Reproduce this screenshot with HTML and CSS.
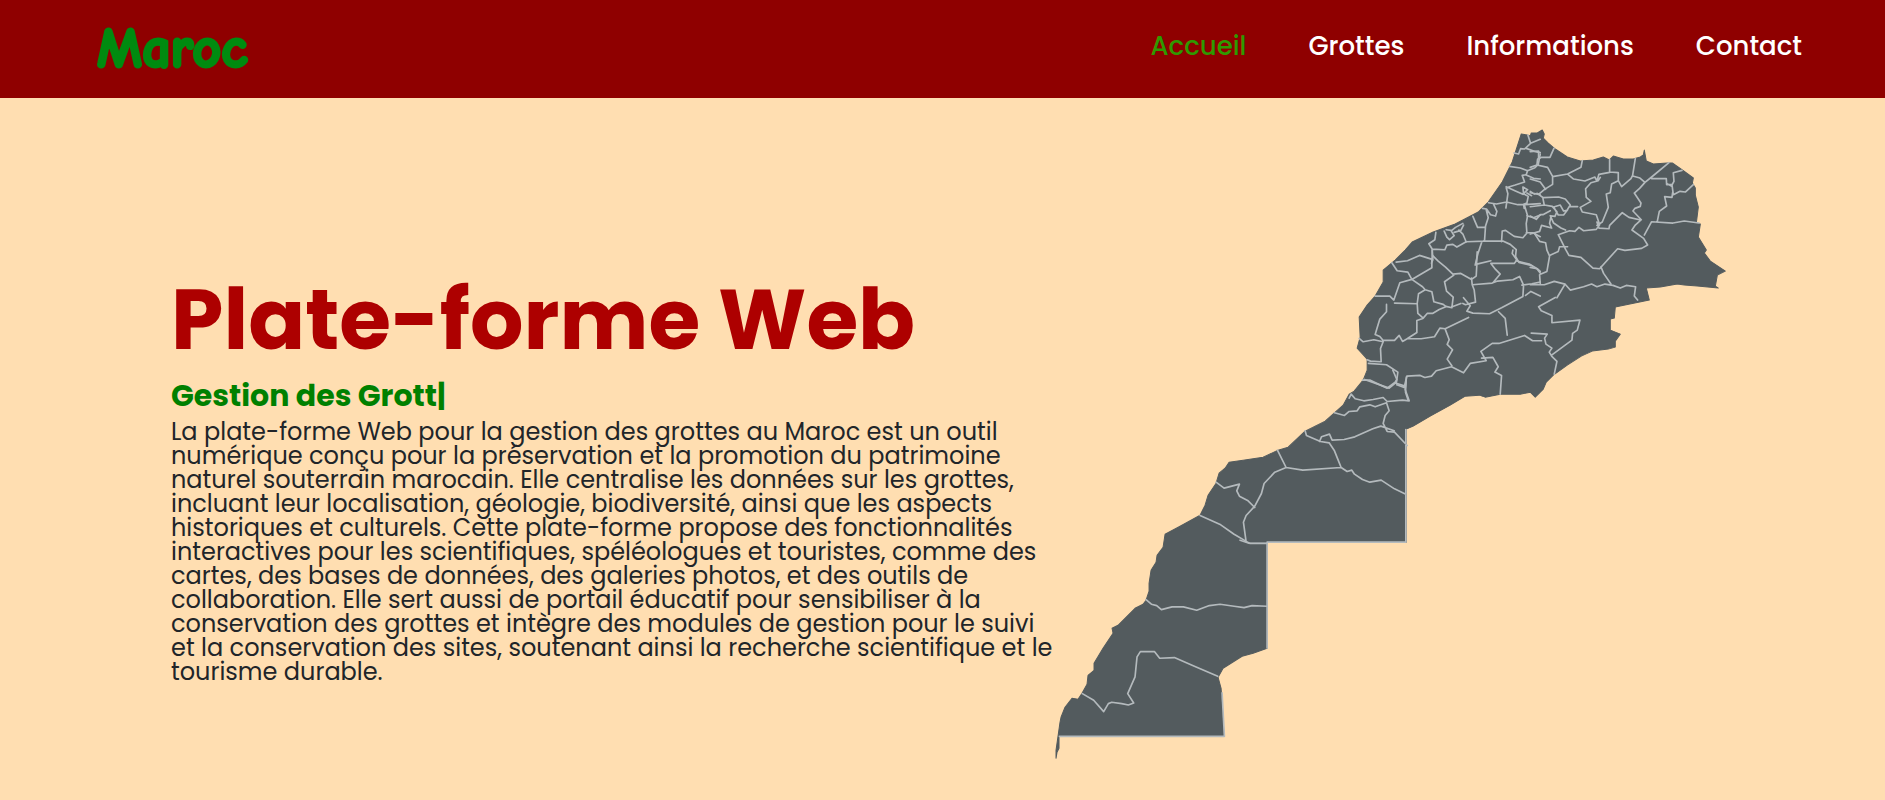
FILE: index.html
```
<!DOCTYPE html>
<html lang="fr">
<head>
<meta charset="utf-8">
<meta name="viewport" content="width=device-width, initial-scale=1">
<title>Maroc</title>
<link rel="stylesheet" href="styles.css">
</head>
<body>
<header class="header">
  <a class="logo" href="#">Maroc</a>
  <nav class="nav">
    <a class="nav-link active" href="#">Accueil</a>
    <a class="nav-link" href="#">Grottes</a>
    <a class="nav-link" href="#">Informations</a>
    <a class="nav-link" href="#">Contact</a>
  </nav>
</header>
<main class="hero">
  <section class="intro">
    <h1 class="title">Plate-forme Web</h1>
    <h2 class="subtitle">Gestion des Grott<span class="cursor">|</span></h2>
    <p class="text">La plate-forme Web pour la gestion des grottes au Maroc est un outil<br>
      numérique conçu pour la préservation et la promotion du patrimoine<br>
      naturel souterrain marocain. Elle centralise les données sur les grottes,<br>
      incluant leur localisation, géologie, biodiversité, ainsi que les aspects<br>
      historiques et culturels. Cette plate-forme propose des fonctionnalités<br>
      interactives pour les scientifiques, spéléologues et touristes, comme des<br>
      cartes, des bases de données, des galeries photos, et des outils de<br>
      collaboration. Elle sert aussi de portail éducatif pour sensibiliser à la<br>
      conservation des grottes et intègre des modules de gestion pour le suivi<br>
      et la conservation des sites, soutenant ainsi la recherche scientifique et le<br>
      tourisme durable.</p>
  </section>
  <svg class="map" viewBox="1050 122 690 642" role="img" aria-label="Carte du Maroc">
    <path class="land" d="M1521 134L1527 135 1530 136 1531 133 1537 133 1542 130 1544 134 1543 138 1548 143 1555 149 1567 157 1580 161 1593 160 1603 157 1609 160 1613 156 1623 159 1633 159 1640 157 1643 155 1644 150 1646 161 1653 164 1667 163 1672 163 1682 170 1693 178 1692 183 1695 188 1695 195 1698 207 1696 223 1700 224 1698 237 1706 250 1704 253 1710 261 1725 271 1717 275 1715 286 1718 288 1697 286 1684 285 1677 284 1660 287 1646 288 1649 300 1615 307 1614 318 1610 319 1610 330 1620 334 1615 341 1615 347 1608 349 1592 351 1581 356 1567 365 1553 375 1546 382 1543 389 1535 397 1530 392 1520 394 1500 394 1485 397 1479 395 1465 396 1450 405 1430 416 1413 426 1406 429 1406 542 1267 542 1267 648 1253 653 1242 656 1223 668 1218 677 1221 688 1224 736 1059 736 1059 748 1057 752 1056 758 1056 750 1060 722 1061 717 1065 707 1072 698 1078 699 1082 693 1087 684 1088 675 1094 670 1094 663 1103 648 1113 633 1112 628 1118 625 1135 608 1143 604 1146 600 1149 591 1149 583 1151 570 1156 562 1157 555 1163 547 1165 534 1180 526 1200 515 1205 505 1208 495 1216 483 1219 473 1225 468 1229 462 1243 460 1263 457 1278 450 1288 447 1305 431 1325 421 1334 413 1343 405 1349 394 1354 391 1363 380 1367 370 1367 359 1357 348 1360 337 1359 317 1367 305 1375 296 1383 282 1383 270 1395 260 1405 250 1412 242 1433 232 1455 224 1478 212 1488 202 1502 182 1512 162Z"/>
    <g class="borders" transform="translate(1340 115) scale(.3333)">
      <path d="M563 60l8 25-18 17-12-1-6 16-14-3M571 85l29-12M558 100l28 10 14 3M508 154l32 5 22 8 22-9 10-10 6-30M562 167l-4 12-12 2 7 20-28 9-27 8 5 18-6 43M558 180l22 10 20 2M498 215l26 12 24 11 14-14-14-8 2 20 14 8-4 20-10 4 2 12M560 234l14 8M445 263l24 4 30-6 34 8 21 0 46-3M460 267l10 22-4 14-15-4-12-17-12-2M438 284l6 24-8 25-3 43-6 3M398 304l14 33 22-1M552 268l10 34-4 24 2 28-12 14-26-4-26-18-10 2-2 32M560 302l20 6 20-8M558 353l20 0 22 12M287 352l-3 22-18 12 10 16 2 32-4 10M276 402l38 2 6-14 18-2 12 8 28-16 54-2 56 0 22 10 18 16-2 20 10 18 40 10M425 380l-12 36-8 34M312 348l8 18 8 8 14-12-10-16-14-2M334 347l12-10 22-12M342 352l20-6 8-16M356 345l12 12 10 24M590 235l10 5"/>
    </g>
    <g class="borders" transform="translate(1530 140) scale(.3333)">
      <path d="M0 35l25-2 0 24 8-5 26 0 12-27M22 57l-2 18-20 7M20 75l32 7 15 27 0 24-24 15-18 15-25-5M0 117l30 9 16 22M0 154l12 8M67 110l45-8 40-20 4-20M112 102l18 15 34 6 30-12 6 12 6-20 32-6 0-38M238 96l26 2 0 24 10 18 28-24 5-10 8-50M307 108l22 6 15 13 20-16 52-43M364 116l44 0 1 18 16 0 4 30 20-10 16 2 24-22M409 130l14 8 8-14-2-26 26-7M427 158l-2 14-22-2 6 28-22 16-6 30M344 127l-16 18-16 14 20 30-2 10-16 6-6 8 25 26-18 16-10 15 35 25 12 20-18 10-50 6-22-5-54 60-20-2-36-32-36-6-10-18-22-44 34-12 16 2 12-12 14 10 38-4 10-14-10-30-42-8-6-14 32-18-14-12-2-26 16-18 22-6 6-10M264 122l-20 10-4 26-12 4 6 40-18 44-16 10M200 246l6 18 30 2 2-10 38-38 20 14 35 8M342 285l22-40 64 4 34-6 44 6M25 163l14 10 46-2 20 6 15 18-10 16-10 2-10-18-20 6 14 24 16 0 12-16M38 175l4 20 24 4 14 16-6 14-14-2 10 22 22 15 14 6M62 230l-4 20 6 14-30-8-6 18-28 8M42 195l-42 5M60 212l-22 12-8 0-12 14-18-10M14 282l14 22 18 4 4 22 8 18-8 46-18 8-12-16-20-4M58 346l26-12 4-14 24 0M212 380l8 20 22 32M0 434l42 0 30-10 32 8 16 18 40-10 24-8 16 8 24-8 24 4 22 8 18-8 28 4-4 28 10 12M28 404l2 26M120 200l22 0"/>
    </g>
    <g class="borders" transform="translate(1340 250) scale(.3333)">
      <path d="M168 36l34-4 36-16 38 12 0-28M276 15l18 18 22 18 22 21 24-2 32 18 14-10 2-36 42-10M411 5l-2 38M155 38l16 24 32 4 12 22 60-35 0-28M215 88l-36 10-18 52-12-12-44 0M215 88l32 22 8 9-20 12-4 30-68-2M255 119l20 6 6 30 28 8 8 6 18 4 4-32-20-18-6-28 28-20M362 160l-26 10M394 84l2 20 6 16 4 36-30 8-8-4M396 104l60-5 16-6 46-4 20-10 12 26-2 34-64 34-36 18-50-2-18-6 10-16-20-24M452 40l14 18 14 14-20 24M452 40l70 0 8-10-14-20 2-10M527 32l40 10 24 14 9 8M545 105l30-4 25-5M556 136l16-12 28 14M385 202l-70 34-16-2-16 26-40 6-42 0-14 8-10-18-14 15-34 0-10-12-14-6 6-20 8-26 20-22 0-22M231 160l2 30 16 14 12-14 16 0 20-12 20-8M248 205l-18 6 0 36-28 18M57 265l12 10 32-6 28 6M129 275l-8 20 2 40-32-2-10-4M85 340l54 4 34 22-4 30-22 18-74-26M170 404l22 8 8-34 40-2 14 6 20-4 14-16 46-12 36 18 20-28 48-8-16-28 34-24 20 0 77-24 24 16 27 0M315 237l12 32-6 14 16 16-16 28 14 20M475 185l20 20 6 50M424 324l34-2 16 28-10 16 20 10-4 56M198 390l-2 36 8 24"/>
    </g>
    <g class="borders" transform="translate(1530 250) scale(.3333)">
      <path d="M75 142l-50 28 8 12 32 14 0 22 84-8-8 30-14 10-2 20-62 46-6-10 8-12-18-12-4-18 8-12-48-3M64 318l16 16-8 38M104 103l-24 40"/>
    </g>
    <g class="borders" transform="translate(1200 370) scale(.3333)">
      <path d="M487 30l22 0 52 24 22-16 32 10M578 0l12 28-6 10M619 20l-4 38 12 34-20-2-46 4-12-12-30 6-28 4-26-6-12-14-6 12M403 128l30 8 14-12 24-2 8-12 30-6 16 6 34-12 8 24-12 14-6 24 12 24 22 2 38 40M582 182l-40-14-24 8-54 24-32 8-36 2-8-18-24 8-6 14M315 182l4 14 42 18 26 4 16 24 12 30 8 20 18 12 14-4 8 12 24 16 22 8 34-6 40 26 34 16M232 240l26 52 50 8 114-8M258 292l-34 14-32 34-8 30-20 38-26 28-8 20 8 58 12 6 50 0M48 336l24 18 46-12-8 20 8 16 26 14 20 20M0 436l62 28 40 28 34 20M617 178v338H201"/>
    </g>
    <g class="borders" transform="translate(1040 540) scale(.3333)">
      <path d="M318 178l16 14 16 4 14 12 32-8 34 0 40 10 38-14 32-4 42 6 30 4 24-6 44 2M127 460l34 20 30 34 14-24 10-4 30 4 20 4 16-6-18-28 22-50 6-60 10-16 42 0 16 20 44-2 60 26 70 30M600 0l27 9h54v314M58 588h495l-7-130"/>
    </g>
  </svg>
</main>
</body>
</html>
```
FILE: styles.css
```
* { box-sizing: border-box; }
body {
  margin: 0;
  min-height: 100vh;
  display: flex;
  flex-direction: column;
  background: #ffdeb1;
  color: #212529;
  font-family: Poppins, Inter, sans-serif;
}
.header {
  display: flex;
  align-items: center;
  justify-content: space-between;
  padding: 12px 83px 18px 97px;
  background: #8f0000;
}
.logo {
  padding-top: 6px;
  color: #008b10;
  font-family: "Comic Sans MS", "Comic Neue", Inter, sans-serif;
  font-size: 56px;
  font-weight: 700;
  line-height: 62px;
  text-decoration: none;
  -webkit-text-stroke: 3px #008b10;
}
.nav { display: flex; gap: 62px; }
.nav-link {
  color: #fff;
  font-size: 26px;
  font-weight: 500;
  line-height: 40px;
  text-decoration: none;
}
.nav-link.active { color: #2f9a00; }
.hero {
  flex: 1;
  display: flex;
  align-items: center;
  padding: 24px 145px 36px 171px;
}
.intro { flex: 1; min-width: 0; padding-top: 68px; white-space: nowrap; }
.title {
  margin: 0;
  color: #ad0000;
  font-size: 84px;
  font-weight: 700;
  line-height: 100px;
}
.subtitle {
  margin: 2px 0 0;
  color: #008000;
  font-size: 30px;
  font-weight: 700;
  line-height: 48px;
}
.text { margin: 0; font-size: 24px; line-height: 24px; }
.map { display: block; flex: none; width: 44%; overflow: visible; }
.land { fill: #535b5e; stroke: #535b5e; stroke-width: 1; stroke-linejoin: round; }
.borders {
  fill: none;
  stroke: #b4babd;
  stroke-width: 5;
  stroke-linecap: round;
  stroke-linejoin: round;
}
```
